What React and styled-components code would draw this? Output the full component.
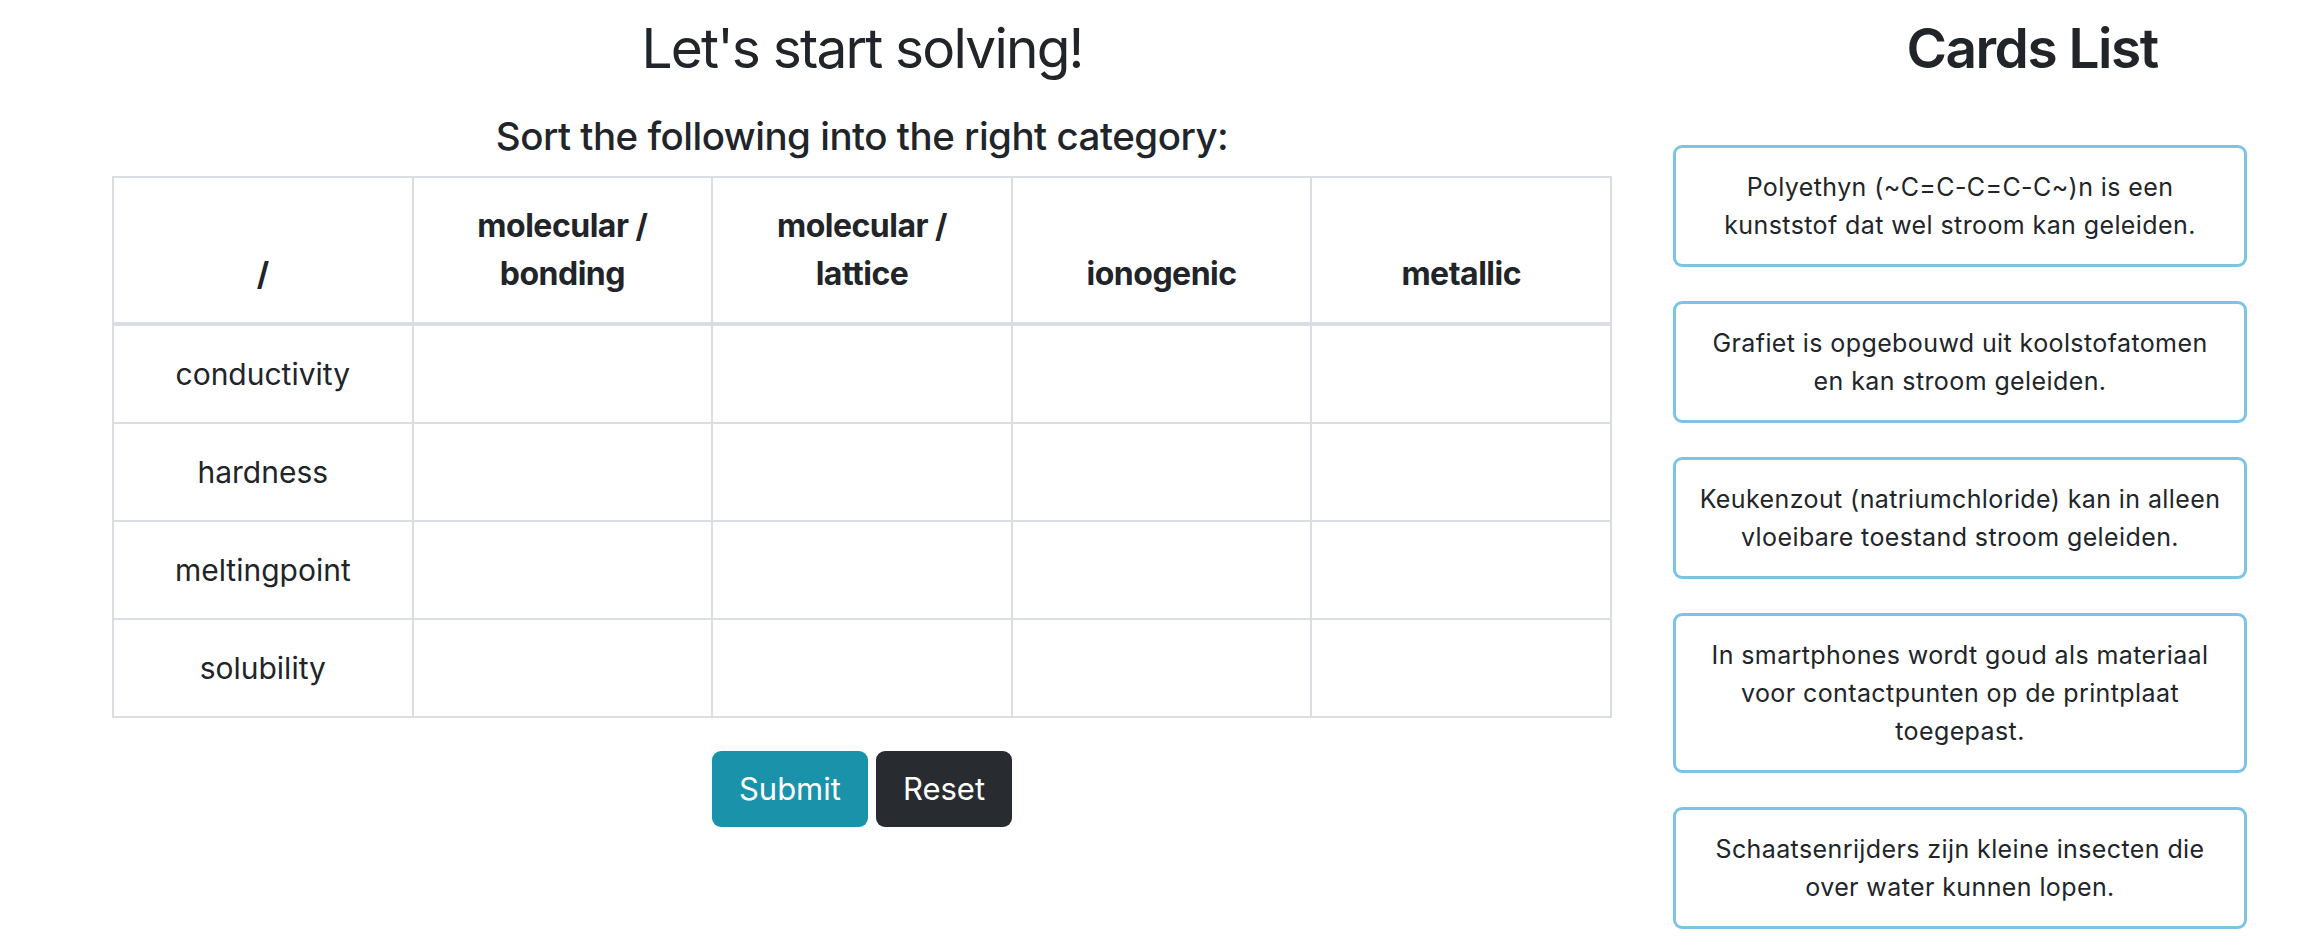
import React from "react";
import styled, { createGlobalStyle } from "styled-components";

const GlobalStyle = createGlobalStyle`
  body {
    margin: 0;
    background: #ffffff;
    color: #212529;
    font-family: Inter, "Noto Sans", "Liberation Sans", sans-serif;
  }
`;

const categories = [
  ["molecular /", "bonding"],
  ["molecular /", "lattice"],
  ["ionogenic"],
  ["metallic"],
];

const properties = ["conductivity", "hardness", "meltingpoint", "solubility"];

// non-breaking space keeps "en kan" together, like the original wrap
const cards = [
  "Polyethyn (~C=C-C=C-C~)n is een kunststof dat wel stroom kan geleiden.",
  "Grafiet is opgebouwd uit koolstofatomen en\u00a0kan stroom geleiden.",
  "Keukenzout (natriumchloride) kan in alleen vloeibare toestand stroom geleiden.",
  "In smartphones wordt goud als materiaal voor contactpunten op de printplaat toegepast.",
  "Schaatsenrijders zijn kleine insecten die over water kunnen lopen.",
];

const App = () => {
  return (
    <>
      <GlobalStyle />
      <Page>
        <Board>
          <Title>Let's start solving!</Title>
          <Subtitle>Sort the following into the right category:</Subtitle>
          <Grid>
            <thead>
              <tr>
                <HeadCell>/</HeadCell>
                {categories.map((lines, i) => (
                  <HeadCell key={i}>
                    {lines.map((line, j) => (
                      <HeadLine key={j}>{line}</HeadLine>
                    ))}
                  </HeadCell>
                ))}
              </tr>
            </thead>
            <tbody>
              {properties.map((name) => (
                <tr key={name}>
                  <Cell>{name}</Cell>
                  {categories.map((_, i) => (
                    <Cell key={i} />
                  ))}
                </tr>
              ))}
            </tbody>
          </Grid>
          <Actions>
            <Button $variant="info">Submit</Button>
            <Button $variant="dark">Reset</Button>
          </Actions>
        </Board>

        <Sidebar>
          <SideTitle>Cards List</SideTitle>
          <CardStack>
            {cards.map((text, i) => (
              <Card key={i}>{text}</Card>
            ))}
          </CardStack>
        </Sidebar>
      </Page>
    </>
  );
};

export default App;

const Page = styled.div`
  display: flex;
  align-items: flex-start;
  padding: 15px 0 0 112px;
`;

const Board = styled.section`
  width: 1500px;
  display: flex;
  flex-direction: column;
  align-items: center;
`;

const Title = styled.h1`
  margin: 0;
  font-size: 55px;
  font-weight: 400;
  line-height: 66px;
  letter-spacing: -1.8px;
`;

const Subtitle = styled.h3`
  margin: 32px 0 0;
  font-size: 38.5px;
  font-weight: 500;
  line-height: 46px;
  letter-spacing: -0.5px;
`;

const Grid = styled.table`
  margin-top: 17px;
  width: 1500px;
  table-layout: fixed;
  border-collapse: collapse;
  text-align: center;
`;

const HeadCell = styled.th`
  border: 2px solid #dadde1;
  border-bottom-width: 4px;
  padding: 24px 8px;
  font-size: 32px;
  font-weight: 700;
  line-height: 48px;
  letter-spacing: -0.5px;
  vertical-align: bottom;
`;

const HeadLine = styled.span`
  display: block;
`;

const Cell = styled.td`
  border: 2px solid #dadde1;
  padding: 24px 8px;
  height: 48px;
  font-size: 30px;
  font-weight: 400;
  line-height: 48px;
  vertical-align: middle;
`;

const Actions = styled.div`
  display: flex;
  gap: 8px;
  margin-top: 33px;
`;

const Button = styled.button`
  border: none;
  border-radius: 9px;
  padding: 15px 27px;
  font-family: inherit;
  font-size: 31px;
  line-height: 46px;
  color: #ffffff;
  background: ${({ $variant }) => ($variant === "info" ? "#1992aa" : "#282c30")};
  cursor: pointer;
`;

const Sidebar = styled.aside`
  width: 574px;
  margin-left: 61px;
  display: flex;
  flex-direction: column;
`;

const SideTitle = styled.h1`
  margin: 0;
  padding-left: 144px;
  text-align: center;
  font-size: 55px;
  font-weight: 600;
  line-height: 66px;
  letter-spacing: -1.5px;
`;

const CardStack = styled.div`
  margin-top: 64px;
  display: flex;
  flex-direction: column;
  gap: 34px;
`;

const Card = styled.div`
  border: 3px solid #7cc3e6;
  border-radius: 9px;
  padding: 20px 14px;
  text-align: center;
  font-size: 25px;
  line-height: 38px;
  letter-spacing: 0.4px;
`;
